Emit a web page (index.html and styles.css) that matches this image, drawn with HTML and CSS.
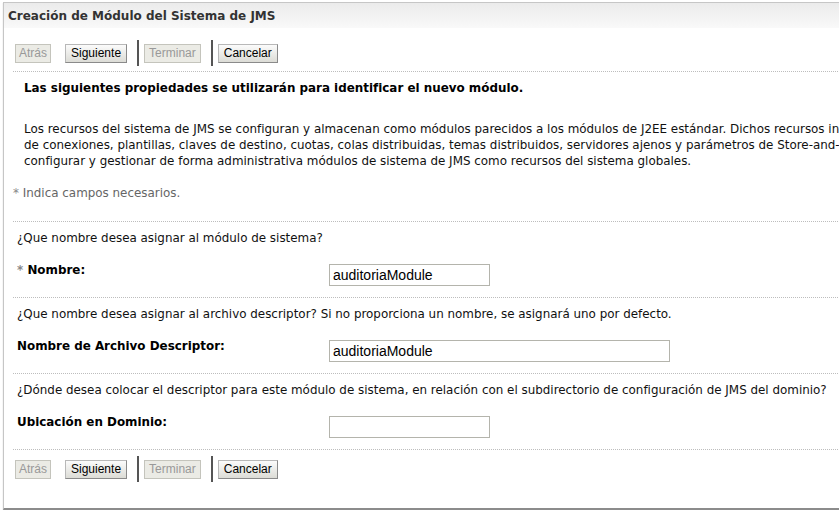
FILE: index.html
```html
<!DOCTYPE html>
<html lang="es">
<head>
<meta charset="utf-8">
<title>Creación de Módulo del Sistema de JMS</title>
<link rel="stylesheet" href="styles.css">
</head>
<body>
<div class="panel">
  <div class="titlebar">Creación de Módulo del Sistema de JMS</div>
  <div class="content">
    <div class="btnrow">
      <button class="btn btn-off btn-first" disabled>Atrás</button>
      <button class="btn btn-second">Siguiente</button>
      <span class="sep"></span>
      <button class="btn btn-off" disabled>Terminar</button>
      <span class="sep"></span>
      <button class="btn btn-last">Cancelar</button>
    </div>
    <div class="intro">
      <p class="heading">Las siguientes propiedades se utilizarán para identificar el nuevo módulo.</p>
      <p class="desc">Los recursos del sistema de JMS se configuran y almacenan como módulos parecidos a los módulos de J2EE estándar. Dichos recursos incluyen colas, temas,<br>de conexiones, plantillas, claves de destino, cuotas, colas distribuidas, temas distribuidos, servidores ajenos y parámetros de Store-and-Forward. Puede<br>configurar y gestionar de forma administrativa módulos de sistema de JMS como recursos del sistema globales.</p>
      <p class="note"><span class="star">*</span> Indica campos necesarios.</p>
    </div>
    <div class="section">
      <p class="question">¿Que nombre desea asignar al módulo de sistema?</p>
      <div class="row">
        <label class="label"><span class="star">*</span> Nombre:</label>
        <input class="field field-short" type="text" value="auditoriaModule">
      </div>
    </div>
    <div class="section">
      <p class="question">¿Que nombre desea asignar al archivo descriptor? Si no proporciona un nombre, se asignará uno por defecto.</p>
      <div class="row">
        <label class="label">Nombre de Archivo Descriptor:</label>
        <input class="field field-long" type="text" value="auditoriaModule">
      </div>
    </div>
    <div class="section">
      <p class="question">¿Dónde desea colocar el descriptor para este módulo de sistema, en relación con el subdirectorio de configuración de JMS del dominio?</p>
      <div class="row">
        <label class="label">Ubicación en Dominio:</label>
        <input class="field field-short" type="text" value="">
      </div>
    </div>
    <div class="bottom">
      <div class="btnrow">
        <button class="btn btn-off btn-first" disabled>Atrás</button>
        <button class="btn btn-second">Siguiente</button>
        <span class="sep"></span>
        <button class="btn btn-off" disabled>Terminar</button>
        <span class="sep"></span>
        <button class="btn btn-last">Cancelar</button>
      </div>
    </div>
  </div>
</div>
</body>
</html>
```
FILE: styles.css
```css
html, body {
  margin: 0;
  padding: 0;
  background: #fff;
  overflow: hidden;
}
body {
  font-family: "DejaVu Sans", Verdana, sans-serif;
  font-size: 11.92px;
  color: #111;
}
p { margin: 0; }

.panel {
  margin: 2px 0 0 3px;
  width: 1200px;
  border: 1px solid #c6c6c6;
  border-bottom: 2px solid #8c8c8c;
  box-shadow: 0 1px 1px #c8c8c8;
}
.titlebar {
  height: 25px;
  display: flex;
  align-items: center;
  padding-left: 4px;
  background: linear-gradient(#ebebeb, #f9f9f9);
  font-weight: bold;
  font-size: 12px;
  color: #333;
}
.content {
  padding-left: 9px;
}
.btnrow {
  display: flex;
  align-items: center;
  height: 30px;
  margin-top: 10px;
  margin-bottom: 3px;
  padding-left: 2px;
}
.btn {
  font-family: "Liberation Sans", Arial, sans-serif;
  font-size: 12px;
  line-height: 15px;
  height: 19px;
  padding: 1px 4px;
  margin: 0;
  color: #000;
  border: 1px solid #8a8a8a;
  border-top-color: #b8b8b8;
  border-left-color: #b8b8b8;
  background: linear-gradient(#fbfbfb, #dcdcd6);
  border-radius: 0;
  box-sizing: border-box;
}
.btn-off {
  color: #999;
  border: 1px solid #c4c4bc;
  background: #ebebe5;
}
.btn-first { padding: 1px 3px; }
.btn-second { margin-left: 14px; padding: 1px 5px; }
.btn-last { padding: 1px 5px; }
.sep {
  width: 2px;
  height: 26px;
  background: #555;
  margin: 0 5px 0 10px;
}
.intro {
  border-top: 1px dotted #bdbdbd;
}
.heading {
  margin-top: 8px;
  padding-left: 11px;
  line-height: 16px;
  font-weight: bold;
  color: #000;
}
.desc {
  margin-top: 25px;
  padding-left: 11px;
  line-height: 16px;
  white-space: nowrap;
}
.note {
  margin-top: 16px;
  line-height: 16px;
  color: #666;
  margin-bottom: 20px;
}
.star { color: #888; }
.section {
  border-top: 1px dotted #bdbdbd;
  padding-top: 8px;
  padding-bottom: 11px;
}
.question {
  padding-left: 4px;
  line-height: 16px;
}
.row {
  display: flex;
  align-items: flex-start;
  margin-top: 16px;
}
.label {
  width: 316px;
  padding-left: 4px;
  box-sizing: border-box;
  line-height: 16px;
  font-weight: bold;
  color: #000;
}
.field {
  margin-top: 2px;
  height: 22px;
  box-sizing: border-box;
  border: 1px solid #b4b4ac;
  padding: 0 3px;
  font-family: "Liberation Sans", Arial, sans-serif;
  font-size: 14px;
  color: #000;
  background: #fff;
}
.field-short { width: 161px; }
.field-long { width: 341px; }
.bottom {
  border-top: 1px dotted #bdbdbd;
  padding-bottom: 24px;
}
.bottom .btnrow {
  margin-top: 4px;
  margin-bottom: 0;
}
```
